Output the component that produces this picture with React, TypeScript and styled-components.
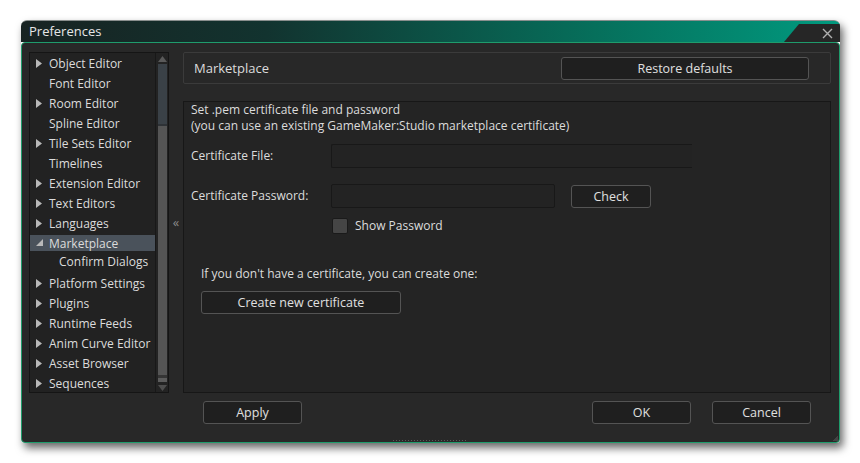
import styled, { createGlobalStyle } from "styled-components";

const GlobalStyle = createGlobalStyle`
  html, body {
    margin: 0;
    padding: 0;
    background: #ffffff;
  }
  body {
    font-family: "Open Sans", "Noto Sans", sans-serif;
    font-size: 12px;
    color: #dcdcdc;
  }
`;

const Page = styled.div`
  width: 860px;
  height: 463px;
  padding: 20px 0 0 21px;
  box-sizing: border-box;
`;

const Window = styled.div`
  width: 819px;
  height: 423px;
  display: flex;
  flex-direction: column;
  border-radius: 6px 6px 4px 4px;
  box-shadow: 3px 5px 8px rgba(0, 0, 0, 0.6);
`;

const TitleBar = styled.div`
  height: 22px;
  flex: none;
  display: flex;
  align-items: stretch;
  border-radius: 6px 6px 0 0;
  border-top: 1px solid #8a8f8e;
  box-sizing: border-box;
  background: linear-gradient(90deg, #182322 0%, #12332f 30%, #066f5b 70%, #019a7f 100%);
  overflow: hidden;
`;

const Title = styled.div`
  flex: 1;
  padding-left: 8px;
  font-size: 13px;
  line-height: 21px;
  color: #e6e6e6;
`;

const CloseTab = styled.div`
  width: 56px;
  flex: none;
  background: #262626;
  clip-path: polygon(15px 3px, 100% 3px, 100% 100%, 0 100%);
  display: flex;
  align-items: center;
  justify-content: flex-end;
  padding: 3px 7px 0 0;
  box-sizing: border-box;
`;

const Body = styled.div`
  flex: 1;
  position: relative;
  background: #282828;
  border: 1px solid #1f9c6c;
  border-radius: 4px;
  display: grid;
  grid-template-columns: 140px 14px 1fr;
  grid-template-rows: 341px 1fr;
  padding: 9px 8px 0 7px;
`;

const Tree = styled.div`
  grid-row: 1;
  grid-column: 1;
  display: flex;
  background: #222222;
  border: 1px solid #151515;
  box-sizing: border-box;
`;

const TreeList = styled.div`
  flex: 1;
`;

const TreeRow = styled.div<{ $tight?: boolean }>`
  height: 20px;
  display: flex;
  align-items: center;
  padding-bottom: ${(p) => (p.$tight ? "3px" : "0")};
  box-sizing: border-box;
`;

const RowBand = styled.div<{ $depth?: number; $selected?: boolean }>`
  flex: 1;
  height: 16px;
  display: flex;
  align-items: center;
  padding-left: ${(p) => (p.$depth ? 29 : 4)}px;
  background: ${(p) => (p.$selected ? "#4a525b" : "transparent")};
  white-space: nowrap;
`;

const Arrow = styled.span`
  width: 15px;
  height: 16px;
  flex: none;
  display: flex;
  align-items: center;
  padding-left: 2px;
  box-sizing: border-box;
`;

const Scrollbar = styled.div`
  width: 13px;
  flex: none;
  display: flex;
  flex-direction: column;
  align-items: center;
  background: #232323;
  border-left: 1px solid #181818;
  padding: 1px 0 0;
  box-sizing: border-box;
`;

const ScrollBtn = styled.div`
  height: 9px;
  flex: none;
  display: flex;
  align-items: center;
  justify-content: center;
`;

const ScrollTrack = styled.div`
  flex: 1;
  width: 9px;
  display: flex;
  flex-direction: column;
  background: #3a4147;
  margin: 1px 0;
`;

const ScrollThumb = styled.div`
  margin-top: 60px;
  flex: 1;
  background: #555555;
  border-top: 2px solid #2e3236;
  border-bottom: 4px solid #5c5c5c;
  box-shadow: inset 0 -3px 0 #353535;
`;

const Splitter = styled.div`
  grid-row: 1;
  grid-column: 2;
  display: flex;
  align-items: center;
  justify-content: center;
  color: #8a8a8a;
  font-size: 13px;
  line-height: 1;
`;

const RightCol = styled.div`
  grid-row: 1;
  grid-column: 3;
  display: flex;
  flex-direction: column;
  gap: 17px;
`;

const HeaderBox = styled.div`
  height: 32px;
  flex: none;
  display: flex;
  align-items: center;
  justify-content: space-between;
  border: 1px solid #3b3b3b;
  border-radius: 2px;
  padding: 0 21px 0 10px;
  box-sizing: border-box;
  font-size: 13px;
`;

const Button = styled.button<{ $width: number }>`
  width: ${(p) => p.$width}px;
  height: 23px;
  flex: none;
  background: #1f1f1f;
  border: 1px solid #545454;
  border-radius: 3px;
  color: #e0e0e0;
  font-family: inherit;
  font-size: 12.5px;
  padding: 0;
`;

const ContentBox = styled.div`
  flex: 1;
  background: #242424;
  border: 1px solid #171717;
  padding: 0 7px;
  line-height: 16px;
`;

const FormRow = styled.div<{ $top: number }>`
  display: flex;
  align-items: center;
  gap: 0;
  margin-top: ${(p) => p.$top}px;
  height: 24px;
`;

const Label = styled.div`
  width: 140px;
  flex: none;
`;

const Input = styled.div<{ $width: number; $open?: boolean }>`
  width: ${(p) => p.$width}px;
  height: 24px;
  box-sizing: border-box;
  background: #232323;
  border: 1px solid #181818;
  border-right: ${(p) => (p.$open ? "none" : "1px solid #181818")};
  border-radius: ${(p) => (p.$open ? "2px 0 0 2px" : "2px")};
  margin-right: 16px;
`;

const CheckRow = styled.div`
  display: flex;
  align-items: center;
  gap: 7px;
  margin: 10px 0 0 141px;
`;

const CheckBox = styled.div`
  width: 16px;
  height: 16px;
  box-sizing: border-box;
  background: #454545;
  border: 1px solid #1a1a1a;
  border-radius: 2px;
`;

const CreateSection = styled.div`
  margin: 32px 0 0 10px;
  display: flex;
  flex-direction: column;
  align-items: flex-start;
  gap: 9px;
`;

const Footer = styled.div`
  grid-row: 2;
  grid-column: 3;
  display: flex;
  align-items: flex-start;
  padding: 8px 20px 0 20px;
  gap: 21px;
`;

const Spacer = styled.div`
  flex: 1;
`;

const Grip = styled.div`
  position: absolute;
  left: 370px;
  bottom: 0;
  width: 76px;
  height: 3px;
  background-image: radial-gradient(circle, #5a5a5a 0.8px, transparent 1px);
  background-size: 3px 3px;
`;

const CornerGrip = styled.div`
  position: absolute;
  right: 1px;
  bottom: 1px;
  width: 6px;
  height: 6px;
  background: linear-gradient(135deg, transparent 50%, #4a4a4a 50%);
  opacity: 0.8;
`;

const TriangleRight = () => (
  <svg width="6" height="9" viewBox="0 0 6 9">
    <path d="M0 0 L6 4.5 L0 9 Z" fill="#b9b9b9" />
  </svg>
);

const TriangleOpen = () => (
  <svg width="8" height="8" viewBox="0 0 8 8">
    <path d="M7 0 L7 7 L0 7 Z" fill="#b9b9b9" />
  </svg>
);

const items: { label: string; arrow?: "closed" | "open"; depth?: number; selected?: boolean }[] = [
  { label: "Object Editor", arrow: "closed" },
  { label: "Font Editor" },
  { label: "Room Editor", arrow: "closed" },
  { label: "Spline Editor" },
  { label: "Tile Sets Editor", arrow: "closed" },
  { label: "Timelines" },
  { label: "Extension Editor", arrow: "closed" },
  { label: "Text Editors", arrow: "closed" },
  { label: "Languages", arrow: "closed" },
  { label: "Marketplace", arrow: "open", selected: true },
  { label: "Confirm Dialogs", depth: 1 },
  { label: "Platform Settings", arrow: "closed" },
  { label: "Plugins", arrow: "closed" },
  { label: "Runtime Feeds", arrow: "closed" },
  { label: "Anim Curve Editor", arrow: "closed" },
  { label: "Asset Browser", arrow: "closed" },
  { label: "Sequences", arrow: "closed" },
];

const App = () => {
  return (
    <Page>
      <GlobalStyle />
      <Window>
        <TitleBar>
          <Title>Preferences</Title>
          <CloseTab>
            <svg width="11" height="11" viewBox="0 0 11 11">
              <path d="M1 1 L10 10 M10 1 L1 10" stroke="#b0b0b0" strokeWidth="1.4" />
            </svg>
          </CloseTab>
        </TitleBar>
        <Body>
          <Tree>
            <TreeList>
              {items.map((item, i) => (
                <TreeRow key={i} $tight={item.depth === 1}>
                  <RowBand $depth={item.depth} $selected={item.selected}>
                    {!item.depth && (
                      <Arrow>
                        {item.arrow === "closed" && <TriangleRight />}
                        {item.arrow === "open" && <TriangleOpen />}
                      </Arrow>
                    )}
                    {item.label}
                  </RowBand>
                </TreeRow>
              ))}
            </TreeList>
            <Scrollbar>
              <ScrollBtn>
                <svg width="9" height="6" viewBox="0 0 9 6">
                  <path d="M0 6 L4.5 0 L9 6 Z" fill="#5a5a5a" />
                </svg>
              </ScrollBtn>
              <ScrollTrack>
                <ScrollThumb />
              </ScrollTrack>
              <ScrollBtn>
                <svg width="9" height="6" viewBox="0 0 9 6">
                  <path d="M0 0 L9 0 L4.5 6 Z" fill="#4e4e4e" />
                </svg>
              </ScrollBtn>
            </Scrollbar>
          </Tree>
          <Splitter>«</Splitter>
          <RightCol>
            <HeaderBox>
              <span>Marketplace</span>
              <Button $width={248}>Restore defaults</Button>
            </HeaderBox>
            <ContentBox>
              <div>
                Set .pem certificate file and password
                <br />
                (you can use an existing GameMaker:Studio marketplace certificate)
              </div>
              <FormRow $top={10}>
                <Label>Certificate File:</Label>
                <Input $width={361} $open />
              </FormRow>
              <FormRow $top={16}>
                <Label>Certificate Password:</Label>
                <Input $width={224} />
                <Button $width={80}>Check</Button>
              </FormRow>
              <CheckRow>
                <CheckBox />
                <span>Show Password</span>
              </CheckRow>
              <CreateSection>
                <span>If you don't have a certificate, you can create one:</span>
                <Button $width={200}>Create new certificate</Button>
              </CreateSection>
            </ContentBox>
          </RightCol>
          <Footer>
            <Button $width={99}>Apply</Button>
            <Spacer />
            <Button $width={99}>OK</Button>
            <Button $width={99}>Cancel</Button>
          </Footer>
          <Grip />
          <CornerGrip />
        </Body>
      </Window>
    </Page>
  );
};

export default App;
